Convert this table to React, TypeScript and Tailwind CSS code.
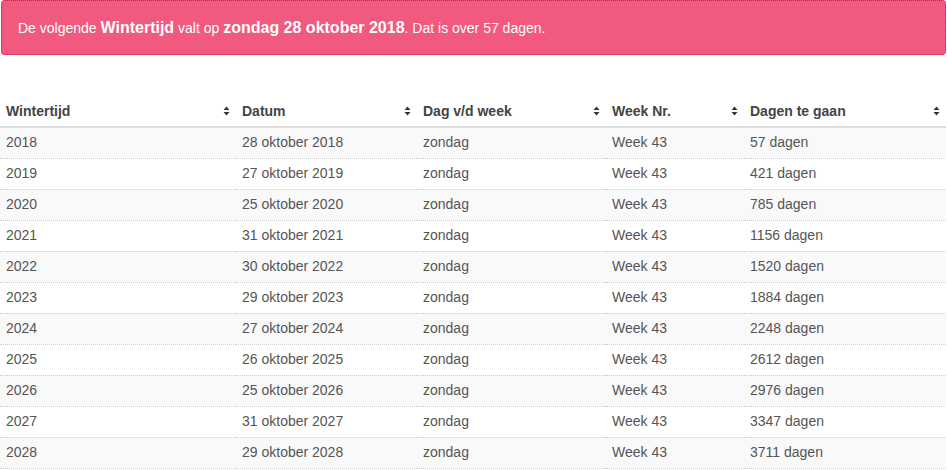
const rows = [
  ["2018", "28 oktober 2018", "57 dagen"],
  ["2019", "27 oktober 2019", "421 dagen"],
  ["2020", "25 oktober 2020", "785 dagen"],
  ["2021", "31 oktober 2021", "1156 dagen"],
  ["2022", "30 oktober 2022", "1520 dagen"],
  ["2023", "29 oktober 2023", "1884 dagen"],
  ["2024", "27 oktober 2024", "2248 dagen"],
  ["2025", "26 oktober 2025", "2612 dagen"],
  ["2026", "25 oktober 2026", "2976 dagen"],
  ["2027", "31 oktober 2027", "3347 dagen"],
  ["2028", "29 oktober 2028", "3711 dagen"],
];

const headers = [
  { label: "Wintertijd", width: "w-[236px]" },
  { label: "Datum", width: "w-[181px]" },
  { label: "Dag v/d week", width: "w-[189px]" },
  { label: "Week Nr.", width: "w-[138px]" },
  { label: "Dagen te gaan", width: "w-[202px]" },
];

const SortIcon = () => (
  <svg width="7" height="10" viewBox="0 0 7 10" className="shrink-0">
    <path d="M3.5 0.5 L6.5 4 L0.5 4 Z" fill="#333" />
    <path d="M0.5 6 L6.5 6 L3.5 9.5 Z" fill="#333" />
  </svg>
);

export default function App() {
  return (
    <div className="w-[947px] h-[470px] overflow-hidden bg-white font-['Liberation_Sans',Arial,sans-serif] text-[14px] text-[#555]">
      <div className="ml-px mr-px h-[55px] rounded-[4px] border border-dotted border-[#c8164f] bg-[#f2597e] px-[16px] flex items-center text-white">
        <p className="leading-5">
          De volgende <strong className="text-[16px]">Wintertijd</strong> valt op{" "}
          <strong className="text-[16px]">zondag 28 oktober 2018</strong>. Dat is over 57 dagen.
        </p>
      </div>

      <table className="mt-[41px] w-[946px] table-fixed border-collapse">
        <thead>
          <tr className="border-b-2 border-[#ddd]">
            {headers.map((h) => (
              <th
                key={h.label}
                className={`${h.width} h-[31px] px-[6px] text-left font-bold text-[#444]`}
              >
                <div className="flex items-center justify-between">
                  <span>{h.label}</span>
                  <SortIcon />
                </div>
              </th>
            ))}
          </tr>
        </thead>
        <tbody>
          {rows.map(([year, date, days], i) => (
            <tr
              key={year}
              className={`border-b border-dotted border-[#ccc] ${i % 2 === 0 ? "bg-[#f9f9f9]" : "bg-white"}`}
            >
              <td className="h-[31px] px-[6px]">{year}</td>
              <td className="px-[6px]">{date}</td>
              <td className="px-[6px]">zondag</td>
              <td className="px-[6px]">Week 43</td>
              <td className="px-[6px]">{days}</td>
            </tr>
          ))}
        </tbody>
      </table>
    </div>
  );
}
